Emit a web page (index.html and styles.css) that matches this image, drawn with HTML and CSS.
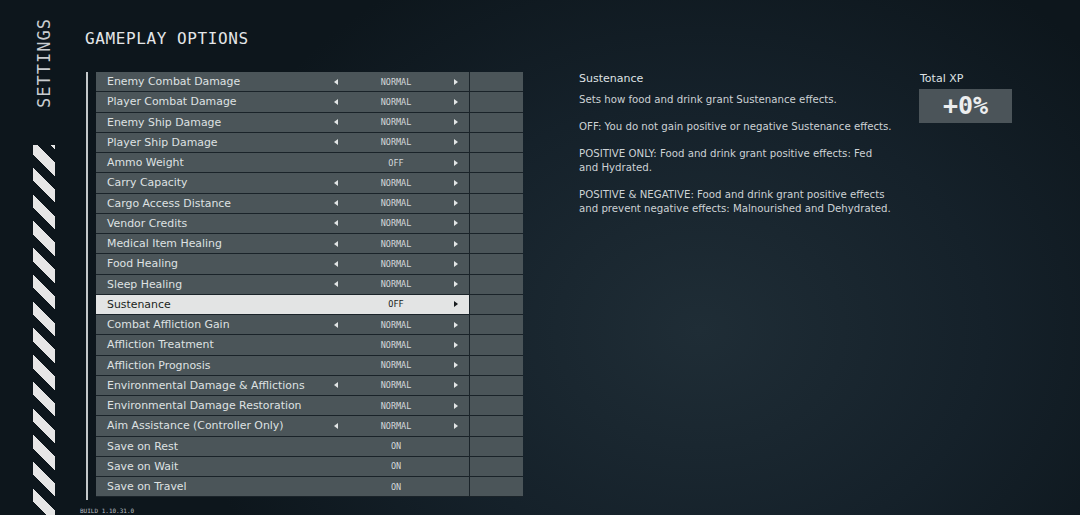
FILE: index.html
```html
<!DOCTYPE html>
<html lang="en">

<head>
    <meta charset="UTF-8">
    <meta name="viewport" content="width=device-width, initial-scale=1.0">
    <title>Gameplay Options</title>
    <link rel="stylesheet" href="styles.css">
</head>

<body>
    <div class="screen">
        <aside class="side">
            <div class="side-title">SETTINGS</div>
            <div class="stripes"></div>
        </aside>

        <main class="main">
            <h1 class="title">GAMEPLAY OPTIONS</h1>
            <div class="panel">
                <div class="rail"></div>
                <div class="options">
                    <div class="row"><span class="name">Enemy Combat Damage</span><span class="value"><i class="arrow left"></i><b>NORMAL</b><i class="arrow right"></i></span><span class="extra"></span></div>
                    <div class="row"><span class="name">Player Combat Damage</span><span class="value"><i class="arrow left"></i><b>NORMAL</b><i class="arrow right"></i></span><span class="extra"></span></div>
                    <div class="row"><span class="name">Enemy Ship Damage</span><span class="value"><i class="arrow left"></i><b>NORMAL</b><i class="arrow right"></i></span><span class="extra"></span></div>
                    <div class="row"><span class="name">Player Ship Damage</span><span class="value"><i class="arrow left"></i><b>NORMAL</b><i class="arrow right"></i></span><span class="extra"></span></div>
                    <div class="row"><span class="name">Ammo Weight</span><span class="value"><i class="arrow left off"></i><b>OFF</b><i class="arrow right"></i></span><span class="extra"></span></div>
                    <div class="row"><span class="name">Carry Capacity</span><span class="value"><i class="arrow left"></i><b>NORMAL</b><i class="arrow right"></i></span><span class="extra"></span></div>
                    <div class="row"><span class="name">Cargo Access Distance</span><span class="value"><i class="arrow left"></i><b>NORMAL</b><i class="arrow right"></i></span><span class="extra"></span></div>
                    <div class="row"><span class="name">Vendor Credits</span><span class="value"><i class="arrow left"></i><b>NORMAL</b><i class="arrow right"></i></span><span class="extra"></span></div>
                    <div class="row"><span class="name">Medical Item Healing</span><span class="value"><i class="arrow left"></i><b>NORMAL</b><i class="arrow right"></i></span><span class="extra"></span></div>
                    <div class="row"><span class="name">Food Healing</span><span class="value"><i class="arrow left"></i><b>NORMAL</b><i class="arrow right"></i></span><span class="extra"></span></div>
                    <div class="row"><span class="name">Sleep Healing</span><span class="value"><i class="arrow left"></i><b>NORMAL</b><i class="arrow right"></i></span><span class="extra"></span></div>
                    <div class="row selected"><span class="name">Sustenance</span><span class="value"><i class="arrow left off"></i><b>OFF</b><i class="arrow right"></i></span><span class="extra"></span></div>
                    <div class="row"><span class="name">Combat Affliction Gain</span><span class="value"><i class="arrow left"></i><b>NORMAL</b><i class="arrow right"></i></span><span class="extra"></span></div>
                    <div class="row"><span class="name">Affliction Treatment</span><span class="value"><i class="arrow left off"></i><b>NORMAL</b><i class="arrow right"></i></span><span class="extra"></span></div>
                    <div class="row"><span class="name">Affliction Prognosis</span><span class="value"><i class="arrow left off"></i><b>NORMAL</b><i class="arrow right"></i></span><span class="extra"></span></div>
                    <div class="row"><span class="name">Environmental Damage &amp; Afflictions</span><span class="value"><i class="arrow left"></i><b>NORMAL</b><i class="arrow right"></i></span><span class="extra"></span></div>
                    <div class="row"><span class="name">Environmental Damage Restoration</span><span class="value"><i class="arrow left off"></i><b>NORMAL</b><i class="arrow right"></i></span><span class="extra"></span></div>
                    <div class="row"><span class="name">Aim Assistance (Controller Only)</span><span class="value"><i class="arrow left"></i><b>NORMAL</b><i class="arrow right"></i></span><span class="extra"></span></div>
                    <div class="row"><span class="name">Save on Rest</span><span class="value"><i class="arrow left off"></i><b>ON</b><i class="arrow right off"></i></span><span class="extra"></span></div>
                    <div class="row"><span class="name">Save on Wait</span><span class="value"><i class="arrow left off"></i><b>ON</b><i class="arrow right off"></i></span><span class="extra"></span></div>
                    <div class="row"><span class="name">Save on Travel</span><span class="value"><i class="arrow left off"></i><b>ON</b><i class="arrow right off"></i></span><span class="extra"></span></div>
                </div>
            </div>
            <div class="build">BUILD 1.10.31.0</div>
        </main>

        <section class="info">
            <h2>Sustenance</h2>
            <p>Sets how food and drink grant Sustenance effects.</p>
            <p>OFF: You do not gain positive or negative Sustenance effects.</p>
            <p>POSITIVE ONLY: Food and drink grant positive effects: Fed<br>and Hydrated.</p>
            <p>POSITIVE &amp; NEGATIVE: Food and drink grant positive effects<br>and prevent negative effects: Malnourished and Dehydrated.</p>
        </section>

        <section class="xp">
            <div class="xp-label">Total XP</div>
            <div class="xp-box">+0%</div>
        </section>
    </div>
</body>

</html>
```

FILE: styles.css
```css
/* Reset */
* {
    margin: 0;
    padding: 0;
    box-sizing: border-box;
}

body {
    width: 1080px;
    height: 515px;
    overflow: hidden;
    font-family: 'DejaVu Sans', sans-serif;
    color: #d6dadc;
    background: radial-gradient(ellipse 520px 420px at 700px 330px, #1f2d36 0%, #15212a 55%, #0d161c 100%);
}

.screen {
    display: flex;
    height: 515px;
}

/* Left strip */
.side {
    width: 85px;
    flex-shrink: 0;
    display: flex;
    flex-direction: column;
    align-items: flex-start;
    padding: 25px 0 0 33px;
}

.side-title {
    writing-mode: vertical-rl;
    transform: rotate(180deg);
    font-family: 'DejaVu Sans Mono', monospace;
    font-size: 17px;
    letter-spacing: 1px;
    color: #c9cdd0;
    width: 22px;
    height: 83px;
    line-height: 22px;
    text-align: center;
}

.stripes {
    margin-top: 37px;
    width: 22px;
    flex: 1;
    background: repeating-linear-gradient(45deg, transparent 0, transparent 9.4px, #e6e6e6 9.4px, #e6e6e6 18.9px);
}

/* Main list */
.main {
    width: 440px;
    flex-shrink: 0;
    display: flex;
    flex-direction: column;
}

.title {
    flex-shrink: 0;
    font-family: 'DejaVu Sans Mono', monospace;
    font-weight: normal;
    font-size: 16px;
    letter-spacing: 0.6px;
    color: #e4e6e8;
    margin: 29px 0 0 0;
    height: 43px;
}

.panel {
    display: flex;
    flex-shrink: 0;
}

.rail {
    width: 2px;
    background: #c4c8ca;
    margin: 0 8px 0 1px;
    height: 428px;
}

.options {
    width: 427px;
    display: flex;
    flex-direction: column;
}

.row {
    display: flex;
    height: 20.25px;
    border-bottom: 1px solid #1a2329;
    background: #4b5559;
    font-size: 10.9px;
}

.name {
    width: 234px;
    padding-left: 11px;
    line-height: 19px;
    color: #dfe2e3;
    white-space: nowrap;
}

.value {
    width: 139px;
    display: flex;
    align-items: center;
    justify-content: space-between;
    padding: 0 11px 0 4px;
}

.value b {
    font-family: 'DejaVu Sans Mono', monospace;
    font-weight: normal;
    font-size: 8.5px;
    color: #d4d8da;
}

.arrow {
    width: 0;
    height: 0;
    border-top: 3.5px solid transparent;
    border-bottom: 3.5px solid transparent;
}

.arrow.left {
    border-right: 4px solid #e2e5e6;
}

.arrow.right {
    border-left: 4px solid #e2e5e6;
}

.arrow.off {
    visibility: hidden;
}

.extra {
    flex: 1;
    border-left: 1px solid #1a2329;
}

.row.selected .name,
.row.selected .value {
    background: #e3e4e4;
    color: #1b1f22;
}

.row.selected .value b {
    color: #1b1f22;
}

.row.selected .arrow.right {
    border-left-color: #1b1f22;
}

.build {
    font-family: 'DejaVu Sans Mono', monospace;
    font-size: 6px;
    line-height: 7px;
    color: #b9bfc2;
    margin-top: 7px;
    margin-left: -5px;
}

/* Description */
.info {
    width: 395px;
    flex-shrink: 0;
    padding: 72px 0 0 54px;
    font-size: 10.2px;
    line-height: 14px;
    color: #cdd2d5;
}

.info h2 {
    font-weight: normal;
    font-size: 11px;
    color: #dfe2e4;
    margin-bottom: 7px;
}

.info p {
    margin-bottom: 13px;
}

/* Total XP */
.xp {
    padding: 72px 0 0 0;
}

.xp-label {
    font-size: 11px;
    color: #dfe2e4;
    margin: 0 0 4px 0;
}

.xp-box {
    width: 93px;
    height: 34px;
    margin-left: -1px;
    background: #4b5459;
    font-family: 'DejaVu Sans Mono', monospace;
    font-weight: bold;
    font-size: 25px;
    line-height: 34px;
    text-align: center;
    color: #eceeef;
}
```
